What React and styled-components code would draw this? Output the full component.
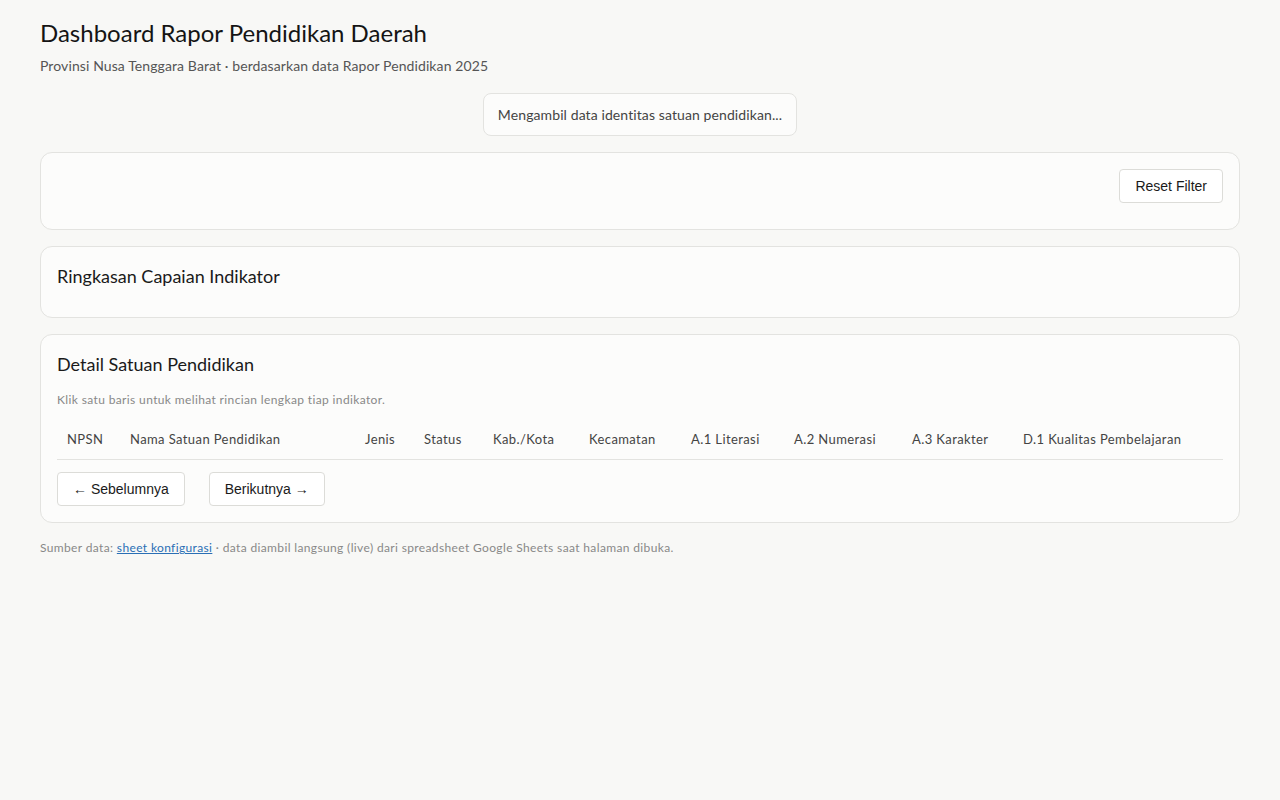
import React from "react";
import styled, { createGlobalStyle } from "styled-components";

const GlobalStyle = createGlobalStyle`
    html, body {
        margin: 0;
        padding: 0;
        background-color: #f8f8f6;
    }
    body {
        font-family: Lato, "Liberation Sans", Arial, sans-serif;
        color: #1a1a1a;
    }
`;

const Page = styled.div`
    padding: 17px 40px 40px;
    display: flex;
    flex-direction: column;
`;

const Title = styled.h1`
    margin: 0;
    font-size: 24px;
    font-weight: 400;
    line-height: 32px;
    color: #141414;
`;

const Subtitle = styled.p`
    margin: 8px 0 0;
    font-size: 14px;
    line-height: 18px;
    letter-spacing: 0.1px;
    color: #555;
`;

const Status = styled.div`
    align-self: center;
    margin-top: 18px;
    padding: 12px 14px;
    font-size: 14px;
    line-height: 17px;
    letter-spacing: 0.1px;
    color: #444;
    background-color: #fcfcfb;
    border: 1px solid #e3e3e0;
    border-radius: 8px;
`;

const Stack = styled.div`
    display: flex;
    flex-direction: column;
    gap: 16px;
    margin-top: 16px;
`;

const Card = styled.section`
    background-color: #fcfcfb;
    border: 1px solid #e3e3e0;
    border-radius: 12px;
    padding: ${(p) => p.$pad || "16px"};
    box-sizing: border-box;
`;

const FilterRow = styled.div`
    display: flex;
    justify-content: flex-end;
    align-items: flex-start;
    height: 44px;
`;

const Button = styled.button`
    font-family: "Liberation Sans", Arial, sans-serif;
    font-size: 14px;
    line-height: 16px;
    color: #1a1a1a;
    background-color: #fff;
    border: 1px solid #dcdcd8;
    border-radius: 4px;
    padding: 8px 15px;
    cursor: pointer;
`;

const CardTitle = styled.h2`
    margin: 0;
    font-size: 18px;
    font-weight: 400;
    line-height: 24px;
    color: #1a1a1a;
`;

const Hint = styled.p`
    margin: 16px 0 0;
    font-size: 12px;
    line-height: 16px;
    letter-spacing: 0.37px;
    color: #888;
`;

const Table = styled.table`
    width: 100%;
    margin-top: 12px;
    border-collapse: collapse;
    table-layout: fixed;
`;

const Th = styled.th`
    width: ${(p) => p.$w - 20}px;
    padding: 11px 10px 11px;
    text-align: left;
    font-size: 13px;
    font-weight: 400;
    line-height: 17px;
    letter-spacing: 0.4px;
    color: #444;
    border-bottom: 1px solid #e3e3e0;
    white-space: nowrap;
`;

const Pager = styled.div`
    display: flex;
    gap: 24px;
    margin-top: 12px;
`;

const Footer = styled.p`
    margin: 17px 0 0;
    font-size: 12px;
    line-height: 16px;
    letter-spacing: 0.36px;
    color: #888;

    a {
        color: #2a6fb5;
        text-decoration: underline;
    }
`;

const columns = [
    { label: "NPSN", w: 63 },
    { label: "Nama Satuan Pendidikan", w: 235 },
    { label: "Jenis", w: 59 },
    { label: "Status", w: 69 },
    { label: "Kab./Kota", w: 96 },
    { label: "Kecamatan", w: 102 },
    { label: "A.1 Literasi", w: 103 },
    { label: "A.2 Numerasi", w: 118 },
    { label: "A.3 Karakter", w: 111 },
    { label: "D.1 Kualitas Pembelajaran", w: 210 },
];

export default function App() {
    return (
        <>
            <GlobalStyle />
            <Page>
                <Title>Dashboard Rapor Pendidikan Daerah</Title>
                <Subtitle>
                    Provinsi Nusa Tenggara Barat · berdasarkan data Rapor
                    Pendidikan 2025
                </Subtitle>
                <Status>Mengambil data identitas satuan pendidikan...</Status>

                <Stack>
                    <Card>
                        <FilterRow>
                            <Button>Reset Filter</Button>
                        </FilterRow>
                    </Card>

                    <Card $pad="17px 16px 29px">
                        <CardTitle>Ringkasan Capaian Indikator</CardTitle>
                    </Card>

                    <Card $pad="17px 16px 16px">
                        <CardTitle>Detail Satuan Pendidikan</CardTitle>
                        <Hint>
                            Klik satu baris untuk melihat rincian lengkap tiap
                            indikator.
                        </Hint>
                        <Table>
                            <thead>
                                <tr>
                                    {columns.map((c) => (
                                        <Th key={c.label} $w={c.w}>
                                            {c.label}
                                        </Th>
                                    ))}
                                </tr>
                            </thead>
                            <tbody />
                        </Table>
                        <Pager>
                            <Button>← Sebelumnya</Button>
                            <Button>Berikutnya →</Button>
                        </Pager>
                    </Card>
                </Stack>

                <Footer>
                    Sumber data: <a href="#sheet">sheet konfigurasi</a> · data
                    diambil langsung (live) dari spreadsheet Google Sheets saat
                    halaman dibuka.
                </Footer>
            </Page>
        </>
    );
}
